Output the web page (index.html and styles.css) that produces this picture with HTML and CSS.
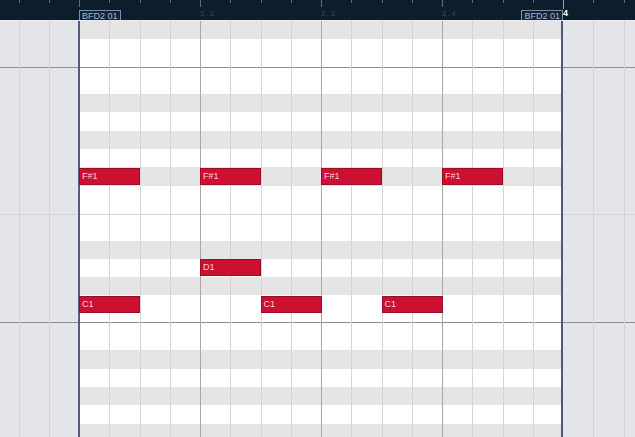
FILE: index.html
```html
<!DOCTYPE html>
<html lang="en">
<head>
    <meta charset="UTF-8">
    <title>Key Editor - BFD2 01</title>
    <link rel="stylesheet" href="styles.css">
</head>
<body>
    <div class="editor">
        <!-- ruler -->
        <div class="ruler">
            <div class="ticks">
                <div class="cell"><i class="tick"></i></div>
                <div class="cell"><i class="tick"></i></div>
                <div class="cell"><i class="tick"></i></div>
                <div class="cell beat"><i class="tick"></i></div>
                <div class="cell"><i class="tick"></i></div>
                <div class="cell"><i class="tick"></i></div>
                <div class="cell"><i class="tick"></i></div>
                <div class="cell beat"><i class="tick"></i><span class="pos">3 . 2</span></div>
                <div class="cell"><i class="tick"></i></div>
                <div class="cell"><i class="tick"></i></div>
                <div class="cell"><i class="tick"></i></div>
                <div class="cell beat"><i class="tick"></i><span class="pos">3 . 3</span></div>
                <div class="cell"><i class="tick"></i></div>
                <div class="cell"><i class="tick"></i></div>
                <div class="cell"><i class="tick"></i></div>
                <div class="cell beat"><i class="tick"></i><span class="pos">3 . 4</span></div>
                <div class="cell"><i class="tick"></i></div>
                <div class="cell"><i class="tick"></i></div>
                <div class="cell"><i class="tick"></i></div>
                <div class="cell bar"><i class="tick"></i><span class="pos">4</span></div>
                <div class="cell"><i class="tick"></i></div>
                <div class="cell"><i class="tick"></i></div>
            </div>
            <div class="tags">
                <span class="tag">BFD2 01</span>
                <span class="tag">BFD2 01</span>
            </div>
        </div>

        <!-- note lanes -->
        <div class="canvas">
            <div class="outside left"></div>
            <div class="region">
                <div class="row alt"></div>
                <div class="row"></div>
                <div class="row"></div>
                <div class="row"></div>
                <div class="row alt"></div>
                <div class="row"></div>
                <div class="row alt"></div>
                <div class="row"></div>
                <div class="row alt"></div>
                <div class="row"></div>
                <div class="row"></div>
                <div class="row"></div>
                <div class="row alt"></div>
                <div class="row"></div>
                <div class="row alt"></div>
                <div class="row"></div>
                <div class="row"></div>
                <div class="row"></div>
                <div class="row alt"></div>
                <div class="row"></div>
                <div class="row alt"></div>
                <div class="row"></div>
                <div class="row alt"></div>

                <div class="note" style="--col:0;--row:8;--len:2">F#1</div>
                <div class="note" style="--col:4;--row:8;--len:2">F#1</div>
                <div class="note" style="--col:8;--row:8;--len:2">F#1</div>
                <div class="note" style="--col:12;--row:8;--len:2">F#1</div>
                <div class="note" style="--col:4;--row:13;--len:2">D1</div>
                <div class="note" style="--col:0;--row:15;--len:2">C1</div>
                <div class="note" style="--col:6;--row:15;--len:2">C1</div>
                <div class="note" style="--col:10;--row:15;--len:2">C1</div>
            </div>
            <div class="outside right"></div>

            <!-- grid lines drawn over the lanes -->
            <div class="hline strong" style="--y:46"></div>
            <div class="hline" style="--y:193"></div>
            <div class="hline strong" style="--y:301"></div>
            <div class="vlines">
                <div class="vl"></div>
                <div class="vl"></div>
                <div class="vl"></div>
                <div class="vl edge"></div>
                <div class="vl"></div>
                <div class="vl"></div>
                <div class="vl"></div>
                <div class="vl beat"></div>
                <div class="vl"></div>
                <div class="vl"></div>
                <div class="vl"></div>
                <div class="vl beat"></div>
                <div class="vl"></div>
                <div class="vl"></div>
                <div class="vl"></div>
                <div class="vl beat"></div>
                <div class="vl"></div>
                <div class="vl"></div>
                <div class="vl"></div>
                <div class="vl edge end"></div>
                <div class="vl"></div>
                <div class="vl"></div>
            </div>
        </div>
    </div>
</body>
</html>
```

FILE: styles.css
```css
body {
    margin: 0;
    font-family: "Liberation Sans", Arial, sans-serif;
    background-color: #e4e5e8;
    overflow: hidden;
}
.editor {
    width: 635px;
    height: 437px;
    overflow: hidden;
}

/* ruler */
.ruler {
    position: relative;
    height: 20px;
    background-color: #0c1e2c;
    border-bottom: 1px solid #e9ebee;
    overflow: hidden;
}
.ticks {
    display: flex;
    margin-left: -11.75px;
    height: 20px;
}
.cell {
    flex: none;
    width: 30.25px;
    display: flex;
    flex-direction: column;
}
.tick {
    display: block;
    width: 1px;
    height: 3px;
    background-color: #5e6d7a;
}
.cell.beat .tick {
    height: 7px;
}
.cell.bar .tick {
    height: 11px;
    background-color: #8fa2b4;
}
.pos {
    margin-top: auto;
    margin-bottom: 2px;
    font-size: 7px;
    line-height: 8px;
    color: #3a4b59;
    white-space: nowrap;
}
.cell.bar .pos {
    font-size: 9px;
    line-height: 9px;
    font-weight: bold;
    color: #ffffff;
}
.tags {
    position: absolute;
    left: 79px;
    width: 484px;
    bottom: 0;
    display: flex;
    justify-content: space-between;
}
.tag {
    height: 9px;
    padding: 0 2px;
    border: 1px solid #7a8fa2;
    border-bottom: none;
    background-color: #10253a;
    color: #a7b8c6;
    font-size: 9px;
    line-height: 10px;
    white-space: nowrap;
}

/* lanes */
.canvas {
    position: relative;
    display: flex;
    height: 416px;
    overflow: hidden;
}
.outside {
    background-color: #e4e5e8;
}
.outside.left {
    flex: none;
    width: 80px;
}
.outside.right {
    flex: 1;
}
.region {
    position: relative;
    flex: none;
    width: 481px;
    background-color: #ffffff;
}
.row {
    height: 18.3px;
}
.row.alt {
    background-color: #e5e5e5;
}
.note {
    position: absolute;
    z-index: 2;
    left: calc(var(--col) * 30.25px - 1px);
    top: calc(var(--row) * 18.3px + 0.5px);
    width: calc(var(--len) * 30.25px + 0.5px);
    height: 17px;
    box-sizing: border-box;
    padding-left: 2px;
    background-color: #cd0f32;
    border: 1px solid #980d27;
    color: #f6d0d7;
    font-size: 9px;
    line-height: 15px;
}
.vlines {
    position: absolute;
    z-index: 1;
    top: 0;
    bottom: 0;
    left: -11.75px;
    display: flex;
}
.vl {
    flex: none;
    width: 30.25px;
    box-sizing: border-box;
    border-left: 1px solid #d3d4d7;
}
.vl.beat {
    border-left-color: #a8a8aa;
}
.vl.edge {
    border-left-color: #4f5588;
    box-shadow: -1px 0 0 #5a5f8c;
}
.vl.edge.end {
    border-left-color: transparent;
    box-shadow: -1px 0 0 #4f5588, -2px 0 0 #4f5588;
}
.hline {
    position: absolute;
    z-index: 1;
    left: 0;
    right: 0;
    top: calc(var(--y) * 1px);
    height: 1px;
    background-color: #d3d4d7;
}
.hline.strong {
    background-color: #8d8e91;
}
```
